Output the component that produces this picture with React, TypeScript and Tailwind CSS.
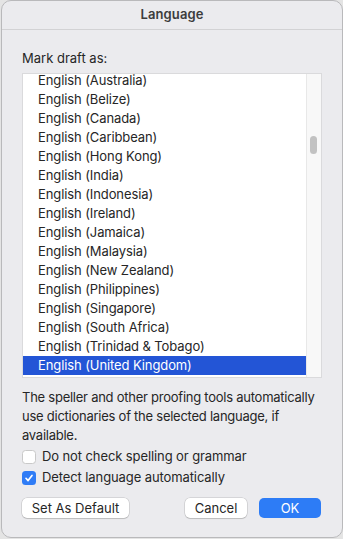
import React from 'react';

const languages = [
  'English (Australia)',
  'English (Belize)',
  'English (Canada)',
  'English (Caribbean)',
  'English (Hong Kong)',
  'English (India)',
  'English (Indonesia)',
  'English (Ireland)',
  'English (Jamaica)',
  'English (Malaysia)',
  'English (New Zealand)',
  'English (Philippines)',
  'English (Singapore)',
  'English (South Africa)',
  'English (Trinidad & Tobago)',
  'English (United Kingdom)',
];

const selected = 'English (United Kingdom)';

function Checkbox({ checked }: { checked: boolean }) {
  if (checked) {
    return (
      <span className="w-[14px] h-[14px] rounded-[3.5px] bg-[#2f7cf6] flex items-center justify-center shrink-0">
        <svg width="10" height="10" viewBox="0 0 10 10" fill="none">
          <path d="M2 5.3 L4.1 7.6 L8 2.4" stroke="white" strokeWidth="1.7" strokeLinecap="round" strokeLinejoin="round" />
        </svg>
      </span>
    );
  }
  return <span className="w-[14px] h-[14px] rounded-[3.5px] bg-white border border-[#c9c9c9] shrink-0" />;
}

function Button({ label, primary, width }: { label: string; primary?: boolean; width: string }) {
  return (
    <button
      className={`${width} h-[20px] rounded-[5px] text-[13px] leading-none flex items-center justify-center ${
        primary
          ? 'bg-[#2d7cf6] text-white'
          : 'bg-white text-[#262626] shadow-[0_0_0_0.5px_rgba(0,0,0,0.18),0_1px_1px_rgba(0,0,0,0.12)]'
      }`}
    >
      {label}
    </button>
  );
}

export default function App() {
  return (
    <div className="w-[343px] h-[539px] bg-[#e4e4e4] font-['Inter','Liberation_Sans',sans-serif] text-[#262626] overflow-hidden">
      <div className="w-[342px] h-[538px] ml-[1px] rounded-[10px] border border-[#b9b9bb] bg-[#ebebee] flex flex-col overflow-hidden">
        {/* Title bar */}
        <div className="h-[29px] shrink-0 border-b border-[#d2d2d4] flex items-center justify-center">
          <span className="text-[13px] font-semibold text-[#3c3c3c] tracking-[0.1px]">Language</span>
        </div>

        <div className="flex flex-col pl-[20px] pr-[21px]">
          <div className="mt-[19px] h-[19px] text-[13px] leading-[19px]">Mark draft as:</div>

          {/* List box, scrolled a few pixels down */}
          <div className="mt-[5px] h-[305px] w-[300px] flex border border-[#dadadc] bg-white">
            <div className="flex-1 overflow-hidden">
              <div className="-mt-[3px]">
                {languages.map((lang) => (
                  <div
                    key={lang}
                    className={`h-[19px] pl-[15px] text-[13px] leading-[19px] tracking-[-0.1px] ${
                      lang === selected ? 'bg-[#2355d6] text-white' : ''
                    }`}
                  >
                    {lang}
                  </div>
                ))}
              </div>
            </div>
            <div className="w-[15px] bg-[#f8f8f8] border-l border-[#e8e8e8] relative">
              <div className="absolute left-[3px] top-[62px] w-[7px] h-[18px] rounded-full bg-[#c2c2c2]" />
            </div>
          </div>

          <p className="mt-[10px] -mr-[8px] text-[13px] leading-[19px] tracking-[-0.25px]">
            The speller and other proofing tools automatically use dictionaries of the selected language, if available.
          </p>

          <div className="mt-[5px] flex flex-col gap-[7px]">
            <label className="flex items-center gap-[6px] h-[14px] text-[13px] tracking-[-0.1px]">
              <Checkbox checked={false} />
              <span>Do not check spelling or grammar</span>
            </label>
            <label className="flex items-center gap-[6px] h-[14px] text-[13px] tracking-[-0.1px]">
              <Checkbox checked />
              <span>Detect language automatically</span>
            </label>
          </div>

          <div className="mt-[13px] flex items-center">
            <Button label="Set As Default" width="w-[107px]" />
            <div className="flex-1" />
            <Button label="Cancel" width="w-[62px]" />
            <div className="w-[12px]" />
            <Button label="OK" primary width="w-[62px]" />
          </div>
        </div>
      </div>
    </div>
  );
}
